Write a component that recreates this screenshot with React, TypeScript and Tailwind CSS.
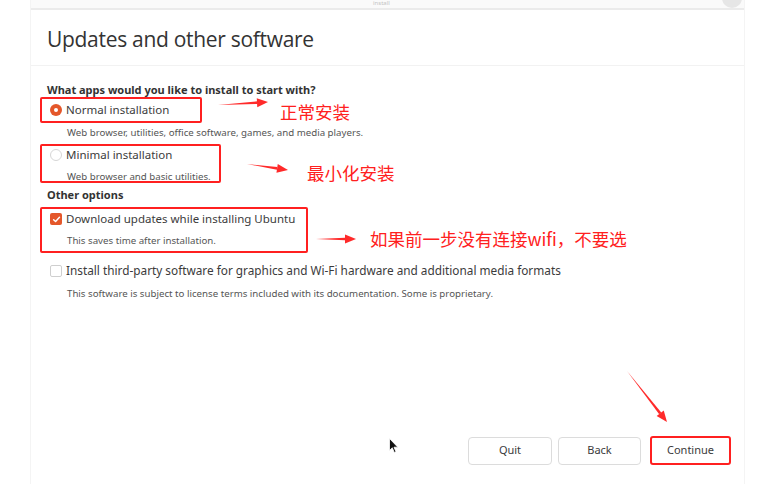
import React from "react";

const Arrow = ({ x1, y1, x2, y2 }: { x1: number; y1: number; x2: number; y2: number }) => {
  const dx = x2 - x1;
  const dy = y2 - y1;
  const len = Math.sqrt(dx * dx + dy * dy);
  const ux = dx / len;
  const uy = dy / len;
  const px = -uy;
  const py = ux;
  const hl = 11;
  const hw = 4.5;
  const bx = x2 - ux * hl;
  const by = y2 - uy * hl;
  const minX = Math.min(x1, x2) - 8;
  const minY = Math.min(y1, y2) - 8;
  const w = Math.abs(dx) + 16;
  const h = Math.abs(dy) + 16;
  const line = `M ${x1 - minX} ${y1 - minY} L ${bx + px * 1.3 - minX} ${by + py * 1.3 - minY} L ${bx - px * 1.3 - minX} ${by - py * 1.3 - minY} Z`;
  const head = `M ${x2 - minX} ${y2 - minY} L ${bx + px * hw - minX} ${by + py * hw - minY} L ${bx - px * hw - minX} ${by - py * hw - minY} Z`;
  return (
    <svg
      className="absolute"
      style={{ left: minX, top: minY }}
      width={w}
      height={h}
    >
      <path d={line} fill="#ff2a2a" />
      <path d={head} fill="#ff2a2a" />
    </svg>
  );
};

const Radio = ({ checked }: { checked?: boolean }) =>
  checked ? (
    <span className="w-[12px] h-[12px] rounded-full bg-[#e4572a] flex items-center justify-center shrink-0">
      <span className="w-[4px] h-[4px] rounded-full bg-white" />
    </span>
  ) : (
    <span className="w-[12px] h-[12px] rounded-full border border-[#d6d6d6] bg-white shrink-0" />
  );

const Check = ({ checked }: { checked?: boolean }) =>
  checked ? (
    <span className="w-[12px] h-[12px] rounded-[2px] bg-[#e4572a] flex items-center justify-center shrink-0">
      <svg width="9" height="9" viewBox="0 0 10 10">
        <path d="M1.8 5.2 L4 7.3 L8.3 2.6" stroke="white" strokeWidth="1.6" fill="none" strokeLinecap="round" strokeLinejoin="round" />
      </svg>
    </span>
  ) : (
    <span className="w-[12px] h-[12px] rounded-[2px] border border-[#cfcfcf] bg-white shrink-0" />
  );

export default function App() {
  return (
    <div className="relative w-[775px] h-[484px] bg-white overflow-hidden font-['Noto_Sans',sans-serif] text-[#3b3b3b]">
      <div className="ml-[30px] w-[715px] h-full border-x border-[#f4f4f4] flex flex-col">
        {/* top bar */}
        <div className="relative h-[10px] bg-[#fafafa] border-b-2 border-[#ebebeb] shrink-0">
          <span className="absolute left-[342px] top-0 text-[6px] leading-[7px] text-[#c4c4c4]">install</span>
          <span className="absolute right-[2px] top-[-12px] w-[20px] h-[20px] rounded-full bg-[#e6e6e6]" />
        </div>
        {/* title */}
        <div className="h-[56px] border-b border-[#f2f2f2] pl-[16px] pt-[4px] flex items-center shrink-0">
          <span className="text-[21px] leading-none text-[#333] tracking-[-0.3px] font-['Open_Sans',sans-serif]">Updates and other software</span>
        </div>
        {/* content */}
        <div className="pl-[9px] pt-[17px] flex flex-col">
          <div className="ml-[7px] h-[14px] leading-[14px] text-[11px] font-bold text-[#333]">
            What apps would you like to install to start with?
          </div>
          <div className="w-[162px] h-[26px] border-2 border-[#ff2020] rounded-[2px] flex items-center pl-[8px] gap-[4px]">
            <Radio checked />
            <span className="text-[11.5px] text-[#3b3b3b]">Normal installation</span>
          </div>
          <div className="ml-[27px] mt-[3px] h-[14px] leading-[14px] text-[9.7px] text-[#555]">
            Web browser, utilities, office software, games, and media players.
          </div>
          <div className="mt-[4px] w-[181px] h-[39px] border-2 border-[#ff2020] rounded-[2px] pl-[8px] pt-[1px] flex flex-col">
            <div className="flex items-center gap-[4px] h-[16px]">
              <Radio />
              <span className="text-[11.5px] text-[#3b3b3b]">Minimal installation</span>
            </div>
            <div className="ml-[17px] mt-[8px] h-[12px] leading-[12px] text-[9.7px] text-[#555]">
              Web browser and basic utilities.
            </div>
          </div>
          <div className="ml-[7px] mt-[5px] h-[14px] leading-[14px] text-[11px] font-bold text-[#333]">Other options</div>
          <div className="mt-[5px] w-[268px] h-[46px] border-2 border-[#ff2020] rounded-[2px] pl-[8px] pt-[2px] flex flex-col">
            <div className="flex items-center gap-[4px] h-[16px]">
              <Check checked />
              <span className="text-[11.5px] text-[#3b3b3b]">Download updates while installing Ubuntu</span>
            </div>
            <div className="ml-[17px] mt-[8px] h-[12px] leading-[12px] text-[9.7px] text-[#555]">
              This saves time after installation.
            </div>
          </div>
          <div className="mt-[10px] pl-[10px] flex items-center gap-[4px] h-[16px]">
            <Check />
            <span className="text-[11.8px] text-[#3b3b3b]">
              Install third-party software for graphics and Wi-Fi hardware and additional media formats
            </span>
          </div>
          <div className="ml-[27px] mt-[9px] h-[12px] leading-[12px] text-[9.7px] text-[#555]">
            This software is subject to license terms included with its documentation. Some is proprietary.
          </div>
        </div>
        <div className="flex-1" />
        {/* buttons */}
        <div className="flex justify-end items-center pr-[13px] pb-[19px] gap-[6px]">
          <button className="w-[84px] h-[28px] rounded-[4px] border border-[#dcdcdc] bg-white text-[11px] text-[#3b3b3b]">Quit</button>
          <button className="w-[83px] h-[28px] rounded-[4px] border border-[#dcdcdc] bg-white text-[11px] text-[#3b3b3b]">Back</button>
          <button className="ml-[3px] w-[81px] h-[29px] rounded-[3px] border-2 border-[#ff2020] bg-white text-[11px] text-[#3b3b3b]">Continue</button>
        </div>
      </div>

      {/* annotations */}
      <Arrow x1={218} y1={105} x2={268} y2={102} />
      <Arrow x1={247} y1={164} x2={288} y2={170} />
      <Arrow x1={316} y1={239} x2={356} y2={239} />
      <Arrow x1={627} y1={371} x2={667} y2={422} />
      <span className="absolute left-[280px] top-[100px] text-[17.5px] leading-[24px] text-[#ff2020] font-['Noto_Sans_CJK_SC',sans-serif]">正常安装</span>
      <span className="absolute left-[307px] top-[161px] text-[17.5px] leading-[24px] text-[#ff2020] font-['Noto_Sans_CJK_SC',sans-serif]">最小化安装</span>
      <span className="absolute left-[370px] top-[227px] text-[17.5px] leading-[24px] text-[#ff2020] font-['Noto_Sans_CJK_SC',sans-serif]">如果前一步没有连接wifi，不要选</span>

      {/* cursor */}
      <svg className="absolute left-[389px] top-[438px]" width="10" height="16" viewBox="0 0 10 16">
        <path d="M0.5 0.5 L0.5 12.5 L3.3 9.8 L5.3 14.5 L7 13.8 L5 9.2 L8.8 9.2 Z" fill="#111" stroke="#fff" strokeWidth="0.8" />
      </svg>
    </div>
  );
}
